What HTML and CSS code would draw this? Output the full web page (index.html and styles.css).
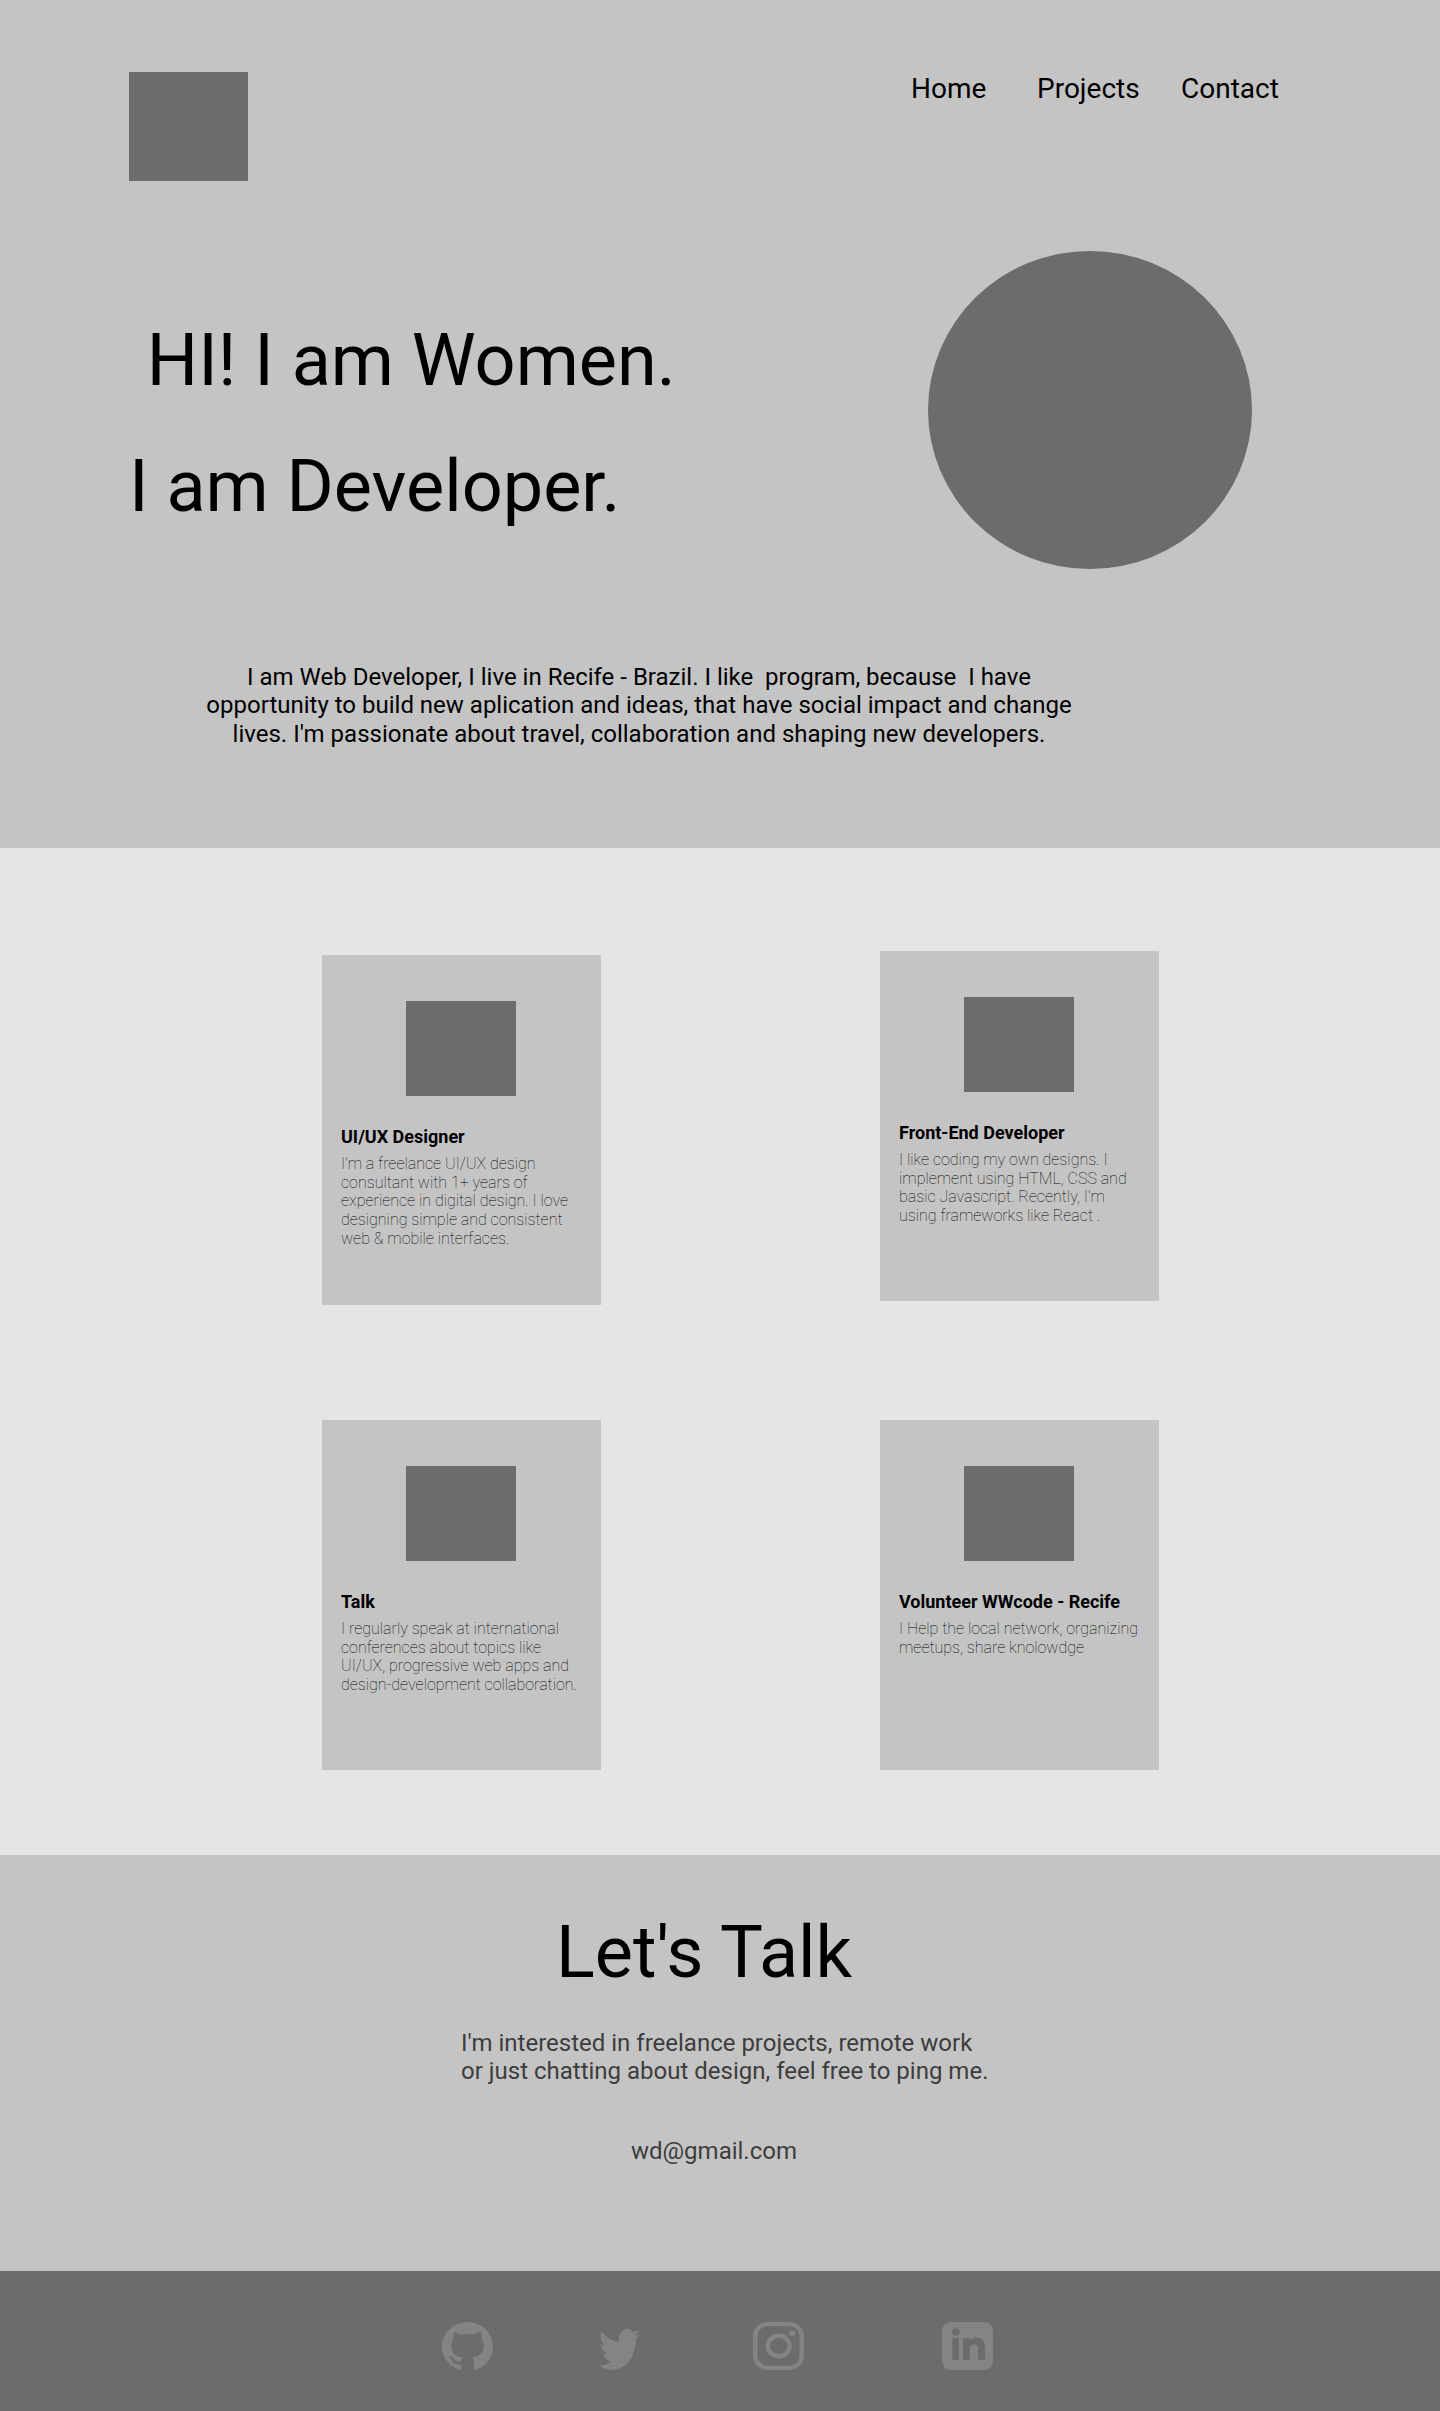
FILE: index.html
```html
<!DOCTYPE html>
<html lang="en">
<head>
<meta charset="utf-8">
<title>Portfolio</title>
<link rel="stylesheet" href="styles.css">
</head>
<body>
<header class="hero">
  <div class="topbar">
    <div class="logo"></div>
    <nav class="nav">
      <a class="nav-home">Home</a>
      <a class="nav-projects">Projects</a>
      <a>Contact</a>
    </nav>
  </div>
  <div class="intro">
    <h1 class="headline"> HI! I am Women.
I am Developer.</h1>
    <div class="portrait"></div>
  </div>
  <p class="about">I am Web Developer, I live in Recife - Brazil. I like  program, because  I have
opportunity to build new aplication and ideas, that have social impact and change
lives. I'm passionate about travel, collaboration and shaping new developers.</p>
</header>
<main class="projects">
  <article class="card">
    <div class="thumb"></div>
    <h2 class="card-title">UI/UX Designer</h2>
    <p class="card-text">I'm a freelance UI/UX design
consultant with 1+ years of
experience in digital design. I love
designing simple and consistent
web &amp; mobile interfaces.</p>
  </article>
  <article class="card card-raised">
    <div class="thumb"></div>
    <h2 class="card-title">Front-End Developer</h2>
    <p class="card-text">I like coding my own designs. I
implement using HTML, CSS and
basic Javascript. Recently, I'm
using frameworks like React .</p>
  </article>
  <article class="card">
    <div class="thumb"></div>
    <h2 class="card-title">Talk</h2>
    <p class="card-text">I regularly speak at international
conferences about topics like
UI/UX, progressive web apps and
design-development collaboration.</p>
  </article>
  <article class="card">
    <div class="thumb"></div>
    <h2 class="card-title">Volunteer WWcode - Recife</h2>
    <p class="card-text">I Help the local network, organizing
meetups, share knolowdge</p>
  </article>
</main>
<section class="contact">
  <h2 class="contact-title">Let's Talk</h2>
  <p class="contact-text">I'm interested in freelance projects, remote work
or just chatting about design, feel free to ping me.</p>
  <p class="contact-mail">wd@gmail.com</p>
</section>
<footer class="footer">
  <svg class="icon github" viewBox="0 0 16 15.6" preserveAspectRatio="none"><path d="M8 0C3.58 0 0 3.58 0 8c0 3.54 2.29 6.53 5.47 7.59.4.07.55-.17.55-.38 0-.19-.01-.82-.01-1.49-2.01.37-2.53-.49-2.69-.94-.09-.23-.48-.94-.82-1.13-.28-.15-.68-.52-.01-.53.63-.01 1.08.58 1.23.82.72 1.21 1.87.87 2.33.66.07-.52.28-.87.51-1.07-1.78-.2-3.64-.89-3.64-3.95 0-.87.31-1.59.82-2.15-.08-.2-.36-1.02.08-2.12 0 0 .67-.21 2.2.82.64-.18 1.32-.27 2-.27s1.36.09 2 .27c1.53-1.04 2.2-.82 2.2-.82.44 1.1.16 1.92.08 2.12.51.56.82 1.27.82 2.15 0 3.07-1.87 3.75-3.65 3.95.29.25.54.73.54 1.48 0 1.07-.01 1.93-.01 2.2 0 .21.15.46.55.38A8.01 8.01 0 0 0 16 8c0-4.42-3.58-8-8-8z"/></svg>
  <svg class="icon twitter" viewBox="0 2.25 24 19.5" preserveAspectRatio="none"><path d="M23.953 4.57a10 10 0 01-2.825.775 4.958 4.958 0 002.163-2.723c-.951.555-2.005.959-3.127 1.184a4.92 4.92 0 00-8.384 4.482C7.69 8.095 4.067 6.13 1.64 3.162a4.822 4.822 0 00-.666 2.475c0 1.71.87 3.213 2.188 4.096a4.904 4.904 0 01-2.228-.616v.06a4.923 4.923 0 003.946 4.827 4.996 4.996 0 01-2.212.085 4.936 4.936 0 004.604 3.417 9.867 9.867 0 01-6.102 2.105c-.39 0-.779-.023-1.17-.067a13.995 13.995 0 007.557 2.209c9.053 0 13.998-7.496 13.998-13.985 0-.21 0-.42-.015-.63A9.935 9.935 0 0024 4.59z"/></svg>
  <svg class="icon instagram" viewBox="0 0 51 48"><rect x="2.25" y="2.1" width="46.5" height="43.8" rx="12.5" ry="11.8" fill="none" stroke="#848484" stroke-width="4.4"/><ellipse cx="25.7" cy="24" rx="11" ry="10.2" fill="none" stroke="#848484" stroke-width="4.4"/><ellipse cx="39.2" cy="11.2" rx="3.1" ry="2.9"/></svg>
  <svg class="icon linkedin" viewBox="0 0 51 48"><path fill-rule="evenodd" d="M10 0H41Q51 0 51 10V38Q51 48 41 48H10Q0 48 0 38V10Q0 0 10 0ZM13.7 6.4A3.8 3.6 0 1 0 13.7 13.6A3.8 3.6 0 1 0 13.7 6.4ZM10.3 16V38H17V16ZM21 16V38H27.7V27C27.7 20.5 36.2 20.5 36.2 27V38H43V25.5C43 14 31.5 13.5 27.5 19V16Z"/></svg>
</footer>
</body>
</html>
```

FILE: styles.css
```css
* { box-sizing: border-box; }
body { margin: 0; background: #e5e5e5; color: #000; font-family: Roboto, sans-serif; }
h1, h2, p { margin: 0; font-weight: 400; white-space: pre; }

.hero { height: 848px; padding: 72px 0 0 129px; background: #c4c4c4; }
.topbar { display: flex; }
.logo { width: 119px; height: 109px; background: #6d6b6c; }
.nav { display: flex; margin-left: 663px; font-size: 28px; line-height: 33px; }
.nav-home { width: 126px; }
.nav-projects { width: 144px; }
.intro { display: flex; height: 318px; margin-top: 70px; }
.headline { width: 799px; padding-top: 47px; font-size: 72px; line-height: 126px; }
.portrait { width: 324px; height: 318px; border-radius: 50%; background: #6d6b6c; }
.about { width: 894px; margin: 94.3px 0 0 63px; font-size: 24px; line-height: 28.125px; text-align: center; }

.projects { display: grid; grid-template-columns: 279px 279px; grid-auto-rows: 350px; gap: 115px 279px; height: 1007px; padding: 107px 0 0 322px; }
.card { height: 350px; padding: 46px 0 0 19px; background: #c4c4c4; }
.card-raised { margin-top: -4px; }
.thumb { width: 110px; height: 95px; margin-left: 65px; background: #6d6b6c; }
.card-title { margin-top: 30px; font-size: 18px; font-weight: 700; line-height: 21px; }
.card-text { margin-top: 7.8px; font-size: 16px; font-weight: 100; line-height: 18.75px; }

.contact { height: 416px; padding: 56px 0 0 461px; background: #c4c4c4; color: #3d3d3d; font-size: 24px; line-height: 28.125px; }
.contact-title { margin-left: 95px; color: #000; font-size: 72px; line-height: 84px; }
.contact-text { margin-top: 34px; }
.contact-mail { margin: 52px 0 0 170px; }

.footer { display: flex; height: 140px; padding: 51px 0 0 442px; background: #6d6b6c; }
.icon { width: 51px; height: 48px; fill: #848484; }
.twitter { width: 41px; height: 41px; margin: 7px 0 0 106px; }
.instagram { margin-left: 113px; }
.linkedin { margin-left: 138px; }
```
